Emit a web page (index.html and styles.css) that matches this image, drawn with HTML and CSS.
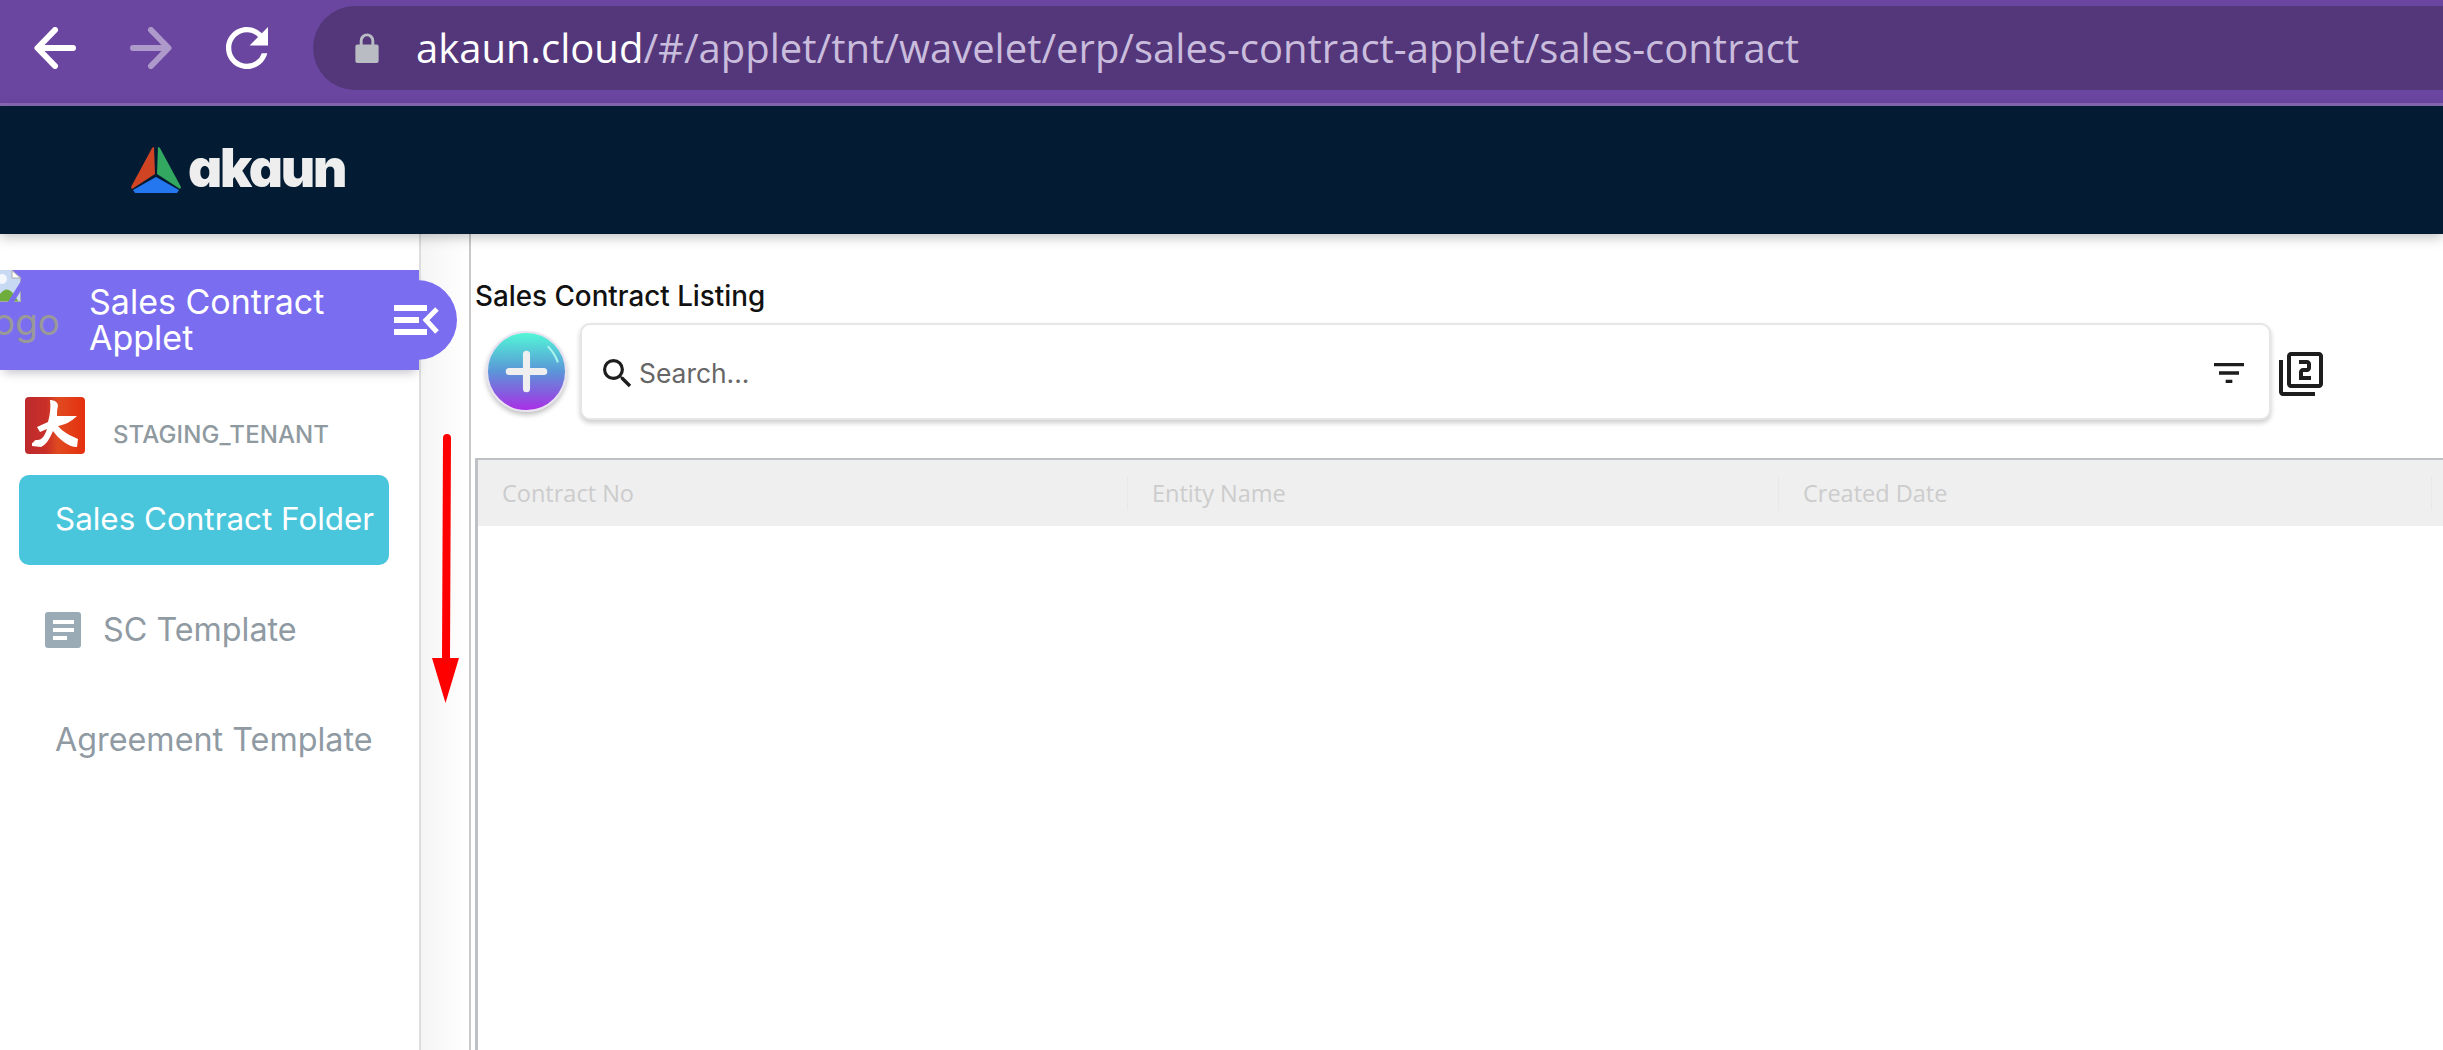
FILE: index.html
```html
<!DOCTYPE html>
<html lang="en">

<head>
    <meta charset="UTF-8">
    <title>Sales Contract Applet</title>
    <link rel="stylesheet" href="styles.css">
</head>

<body>
    <!-- browser chrome -->
    <div class="browser_bar">
        <svg class="nav_icon" viewBox="0 0 42 42"><path d="M39 21H4M21 3L3.500 21L21 39" fill="none" stroke="#fff" stroke-width="6" stroke-linecap="round" stroke-linejoin="round"/></svg>
        <svg class="nav_icon faded" viewBox="0 0 42 42"><path d="M3 21H38M21 3L38.500 21L21 39" fill="none" stroke="#fff" stroke-width="6" stroke-linecap="round" stroke-linejoin="round"/></svg>
        <svg class="nav_icon" viewBox="4 4 16 16"><path fill="#fff" d="M17.650 6.350A7.958 7.958 0 0 0 12 4c-4.420 0-7.990 3.580-7.990 8s3.570 8 7.990 8c3.730 0 6.840-2.550 7.730-6h-2.080A5.990 5.990 0 0 1 12 18c-3.310 0-6-2.690-6-6s2.690-6 6-6c1.660 0 3.140.690 4.220 1.780L13 11h7V4l-2.350 2.350z"/></svg>
        <div class="omnibox">
            <svg class="lock" viewBox="0 0 24 32"><path d="M6 14V9a6 6 0 0 1 12 0v5" fill="none" stroke="#b9bcc2" stroke-width="3"/><rect x="0" y="13" width="24" height="19" rx="2" fill="#b9bcc2"/></svg>
            <span class="url">akaun.cloud<span class="url_path">/#/applet/tnt/wavelet/erp/sales-contract-applet/sales-contract</span></span>
        </div>
    </div>

    <div class="top_nav">
        <svg class="brand_mark" viewBox="0 0 50 46">
            <path fill="#d04424" d="M23 0Q21 0 20 3L0 40L1 42L24 27Z"/>
            <path fill="#33a860" d="M27 0Q29 0 30 3L50 40L49 42L26 27Z"/>
            <path fill="#2477ee" d="M25 30L2 43L4 46H46L48 43Z"/>
        </svg>
        <span class="brand_name">akaun</span>
    </div>

    <div class="page">
        <div class="sidebar">
            <div class="applet_head">
                <svg class="broken_img" viewBox="0 0 21 32">
                    <path fill="#c8d9f3" d="M0 0H12L21 8V32H0Z"/>
                    <circle cx="2" cy="9" r="5" fill="#f4f7fc"/>
                    <path fill="#6fae3c" d="M0 32V24Q6 16 12 22L19 32Z"/>
                    <path fill="#fff" stroke="#a8a8a8" d="M12 .5L20.500 8H12Z"/>
                    <path fill="none" stroke="#a8a8a8" d="M20.500 8V31.500H0"/>
                    <path stroke="#7a6df0" stroke-width="5" d="M24 11L9 35"/>
                </svg>
                <span class="logo_alt">logo</span>
                <span class="applet_title">Sales Contract Applet</span>
                <div class="collapse_btn">
                    <svg viewBox="0 0 45 30">
                        <rect width="33" height="6" fill="#fff"/>
                        <rect y="12" width="25" height="6" fill="#fff"/>
                        <rect y="24" width="33" height="6" fill="#fff"/>
                        <path d="M43 4L32 15L43 27" fill="none" stroke="#fff" stroke-width="5"/>
                    </svg>
                </div>
            </div>

            <div class="tenant">
                <svg class="tenant_logo" viewBox="0 0 60 57">
                    <defs>
                        <linearGradient id="tenantRed" x1="0" x2="1" y1="0" y2="0">
                            <stop offset="0" stop-color="#bd2b2e"/>
                            <stop offset="0.35" stop-color="#c92f28"/>
                            <stop offset="0.55" stop-color="#e04a20"/>
                            <stop offset="1" stop-color="#e5300f"/>
                        </linearGradient>
                    </defs>
                    <rect width="60" height="57" rx="4" fill="url(#tenantRed)"/>
                    <path fill="#fff" d="M25 3C29 3 33 5 33 9C32 12 32 15 32 19L52 19C46 25 39 28 33 29C38 35 46 39 53 42L52 50C43 50 34 42 28 34C25 41 22 47 16 50L7 49L7 46C9 46 9 43 11 43C17 44 20 38 22 32L15 35L12 30L23 25C25 18 26 10 25 3Z"/>
                </svg>
                <span class="tenant_name">STAGING_TENANT</span>
            </div>

            <div class="menu_item active">Sales Contract Folder</div>
            <div class="menu_item with_icon">
                <svg class="doc_icon" viewBox="0 0 36 36">
                    <rect width="36" height="36" rx="3" fill="#9aabb5"/>
                    <rect x="8" y="8" width="21" height="4" fill="#fff"/>
                    <rect x="8" y="16" width="21" height="4" fill="#fff"/>
                    <rect x="8" y="24" width="14" height="4" fill="#fff"/>
                </svg>
                SC Template
            </div>
            <div class="menu_item">Agreement Template</div>
        </div>

        <div class="gutter"></div>

        <div class="content">
            <div class="listing_title">Sales Contract Listing</div>
            <div class="toolbar">
                <div class="add_btn">
                    <svg viewBox="0 0 76 76">
                        <path d="M59 13Q66 20 69 29" fill="none" stroke="#a9f3ee" stroke-width="2"/>
                        <path d="M38 21V55M21 38H55" stroke="#efefef" stroke-width="7" stroke-linecap="round"/>
                    </svg>
                </div>
                <div class="search_box">
                    <svg class="search_icon" viewBox="3 3 18 18"><path fill="#1d1d1d" d="M15.500 14h-.790l-.280-.270A6.471 6.471 0 0 0 16 9.500 6.500 6.500 0 1 0 9.500 16c1.610 0 3.090-.590 4.230-1.570l.270.280v.790l5 4.990L20.490 19l-4.990-5zm-6 0C7.010 14 5 11.990 5 9.500S7.010 5 9.500 5 14 7.010 14 9.500 11.990 14 9.500 14z"/></svg>
                    <span class="search_text">Search...</span>
                    <svg class="filter_icon" viewBox="3 6 18 12"><path fill="#1d1d1d" d="M10 18h4v-2h-4v2zM3 6v2h18V6H3zm3 7h12v-2H6v2z"/></svg>
                </div>
                <svg class="count_icon" viewBox="1 1 22 22"><path fill="#1d1d1d" d="M3 5H1v16c0 1.100.9 2 2 2h16v-2H3V5zm18-4H7c-1.100 0-2 .9-2 2v14c0 1.100.9 2 2 2h14c1.100 0 2-.9 2-2V3c0-1.100-.9-2-2-2zm0 16H7V3h14v14zm-4-4h-4v-2h2c1.100 0 2-.890 2-2V7c0-1.110-.9-2-2-2h-4v2h4v2h-2c-1.100 0-2 .890-2 2v4h6v-2z"/></svg>
            </div>

            <div class="grid_table">
                <div class="grid_head">
                    <div class="grid_col">Contract No</div>
                    <div class="grid_col">Entity Name</div>
                    <div class="grid_col">Created Date</div>
                </div>
            </div>
        </div>

        <!-- red annotation arrow drawn over the screenshot -->
        <svg class="red_arrow" viewBox="0 0 28 270">
            <path d="M11 5Q11 1 15 1Q19 1 19 5L18 225H27L13.500 270L0 225H10Z" fill="#f00"/>
        </svg>
    </div>
</body>

</html>
```

FILE: styles.css
```css
* {
    box-sizing: border-box;
}

html,
body {
    height: 100%;
}

body {
    margin: 0;
    display: flex;
    flex-direction: column;
    overflow: hidden;
    background-color: #fff;
    font-family: "Inter", "Liberation Sans", sans-serif;
}

.browser_bar {
    display: flex;
    align-items: center;
    height: 106px;
    flex-shrink: 0;
    padding: 7px 0 15px 34px;
    background-color: #6b46a1;
    border-bottom: 3px solid #8a6bb5;
}

.nav_icon {
    width: 42px;
    height: 42px;
    margin-right: 54px;
}

.nav_icon.faded {
    opacity: 0.45;
}

.omnibox {
    display: flex;
    align-items: center;
    height: 84px;
    margin-left: -9px;
    padding-left: 42px;
    flex: 1;
    background-color: #53377a;
    border-radius: 42px 0 0 42px;
}

.lock {
    width: 24px;
    height: 31px;
    margin-right: 37px;
}

.url {
    font-family: "Open Sans", sans-serif;
    font-size: 40px;
    color: #fff;
    white-space: nowrap;
}

.url_path {
    color: #c9bcdc;
}

.top_nav {
    position: relative;
    z-index: 2;
    display: flex;
    align-items: center;
    height: 128px;
    flex-shrink: 0;
    padding-left: 131px;
    background-color: #031c34;
    box-shadow: 0 3px 12px rgba(0, 0, 0, 0.25);
}

.brand_mark {
    width: 50px;
    height: 46px;
    margin-right: 7px;
}

.brand_name {
    margin-bottom: 3px;
    font-size: 53px;
    font-weight: 900;
    font-feature-settings: "cv11";
    line-height: 1;
    letter-spacing: -2.200px;
    color: #eee;
}

.page {
    position: relative;
    display: flex;
    flex: 1;
    min-height: 0;
}

.sidebar {
    width: 421px;
    flex-shrink: 0;
    padding-top: 36px;
    border-right: 2px solid #ddd;
}

.applet_head {
    position: relative;
    display: flex;
    align-items: center;
    height: 100px;
    background-color: #7a6df0;
    box-shadow: 0 6px 10px -4px rgba(60, 60, 90, 0.35);
}

.broken_img {
    position: absolute;
    left: 0;
    top: 0;
    width: 21px;
    height: 32px;
}

.logo_alt {
    position: absolute;
    left: -16px;
    top: 29px;
    font-size: 37px;
    color: #999;
}

.applet_title {
    width: 290px;
    margin-left: 89px;
    font-size: 34px;
    line-height: 36px;
    color: #fff;
}

.collapse_btn {
    position: absolute;
    right: -38px;
    top: 10px;
    display: flex;
    align-items: center;
    width: 80px;
    height: 80px;
    padding-left: 17px;
    background-color: #7a6df0;
    border-radius: 0 40px 40px 0;
}

.collapse_btn svg {
    width: 45px;
    height: 30px;
}

.tenant {
    display: flex;
    align-items: flex-end;
    height: 57px;
    margin-top: 27px;
    padding-left: 25px;
}

.tenant_logo {
    width: 60px;
    height: 57px;
    margin-right: 28px;
}

.tenant_name {
    margin-bottom: 5px;
    font-size: 24px;
    font-weight: 500;
    letter-spacing: 0.1px;
    color: #8f9aa0;
}

.menu_item {
    display: flex;
    align-items: center;
    height: 90px;
    margin: 20px 30px 20px 19px;
    padding: 0 0 2px 36px;
    font-size: 32.300px;
    color: #8f9aa3;
}

.menu_item.active {
    margin-top: 21px;
    background-color: #4ac6dc;
    border-radius: 10px;
    font-size: 31.400px;
    color: #fff;
}

.menu_item.with_icon {
    padding-left: 26px;
}

.doc_icon {
    width: 36px;
    height: 36px;
    margin: 2px 22px 0 0;
}

.gutter {
    width: 48px;
    flex-shrink: 0;
    background: linear-gradient(to right, #f5f5f5, #fff);
}

.content {
    display: flex;
    flex-direction: column;
    flex: 1;
    min-width: 0;
    padding: 44px 0 0 4px;
    border-left: 2px solid #c9c9c9;
}

.listing_title {
    font-size: 27.800px;
    font-weight: 500;
    line-height: 36px;
    color: #111;
}

.toolbar {
    display: flex;
    align-items: center;
    margin-top: 9px;
    padding-left: 11px;
}

.add_btn {
    width: 81px;
    height: 81px;
    margin-right: 13px;
    flex-shrink: 0;
    border: 2px solid #e8e2f0;
    border-radius: 50%;
    background: linear-gradient(to bottom, #52f7d6, #5b95d8 50%, #a92fe6);
    box-shadow: 0 3px 5px rgba(0, 0, 0, 0.25);
}

.add_btn svg {
    display: block;
}

.search_box {
    display: flex;
    align-items: center;
    width: 1691px;
    height: 97px;
    flex-shrink: 0;
    padding: 3px 25px 0 21px;
    background-color: #fff;
    border: 2px solid #e6e6e6;
    border-radius: 10px;
    box-shadow: 0 3px 5px rgba(0, 0, 0, 0.2);
}

.search_icon {
    width: 29px;
    height: 29px;
    margin-right: 7px;
}

.search_text {
    flex: 1;
    font-size: 26.400px;
    color: #666;
}

.filter_icon {
    width: 30px;
    height: 20px;
}

.count_icon {
    width: 44px;
    height: 44px;
    margin: 5px 0 0 8px;
    flex-shrink: 0;
}

.grid_table {
    flex: 1;
    margin-top: 38px;
    border-top: 2px solid #bdc1c6;
    border-left: 3px solid #bdc1c6;
}

.grid_head {
    display: grid;
    grid-template-columns: 650px 651px 653px 1fr;
    align-items: center;
    height: 66px;
    background-color: #efefef;
}

.grid_col {
    display: flex;
    align-items: center;
    height: 33px;
    padding-left: 24px;
    font-family: "Open Sans", sans-serif;
    font-size: 23.500px;
    color: #ccc;
    border-right: 1px solid #e8e8e8;
}

.red_arrow {
    position: absolute;
    left: 432px;
    top: 199px;
    width: 28px;
    height: 270px;
}
```
